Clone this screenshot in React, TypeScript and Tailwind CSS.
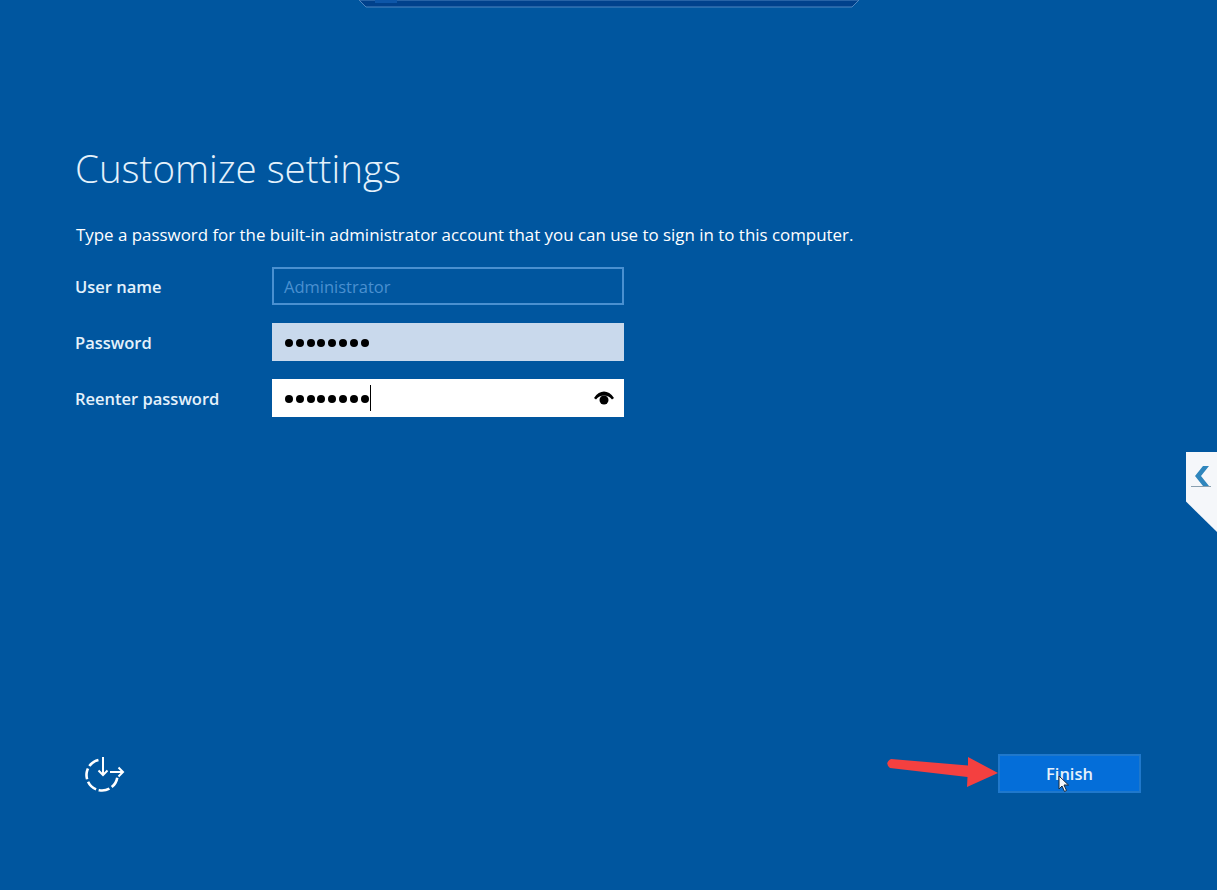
const fontStack = "font-['Open_Sans','Noto_Sans',sans-serif]";

function TopBar() {
  return (
    <div className="flex justify-center h-[8px]">
      <svg width="504" height="8" viewBox="0 0 504 8">
        <polygon points="2,0 9,7 495,7 502,0" fill="#00418c" stroke="#4f86c0" strokeWidth="1" />
        <rect x="18" y="0" width="22" height="3" fill="#0d56a8" />
      </svg>
    </div>
  );
}

function AccessIcon() {
  return (
    <svg width="42" height="38" viewBox="0 0 42 38" fill="none" stroke="#fff">
      {/* open at the top right, where the two arrows leave the ring */}
      <circle
        cx="19"
        cy="20"
        r="15.5"
        strokeWidth="2.6"
        strokeDasharray="11.1 2.7 11.1 2.7 11.1 2.7 11.1 2.7 11.1 100"
        transform="rotate(10 19 20)"
      />
      <path d="M20 2v18M15.5 15.5l4.5 4.5 4.5-4.5" strokeWidth="2" />
      <path d="M27 17h13M35.5 12.5l4.5 4.5-4.5 4.5" strokeWidth="2" />
    </svg>
  );
}

function Dots() {
  return (
    <div className="flex gap-[2.8px] pt-px">
      {[0, 1, 2, 3, 4, 5, 6, 7].map((i) => (
        <span key={i} className="w-[8px] h-[8px] rounded-full bg-black" />
      ))}
    </div>
  );
}

export default function App() {
  return (
    <div className={`relative h-[890px] overflow-hidden bg-[#00569f] flex flex-col ${fontStack}`}>
      <TopBar />

      <div className="pl-[75px] pt-[136px]">
        <h1 className="text-[38.5px] leading-[48px] font-light text-[#e4f1fb]">Customize settings</h1>
        <p className="mt-[31px] ml-px text-[16.9px] leading-[24px] text-white">
          Type a password for the built-in administrator account that you can use to sign in to this computer.
        </p>

        <div className="mt-[20px] flex flex-col gap-[18px]">
          <div className="flex items-center">
            <label className="w-[197px] pt-[2px] text-[16.5px] font-semibold text-[#e4f1fb]">User name</label>
            <div className="w-[352px] h-[38px] border-2 border-[#4a90d0] px-[10px] pt-[2px] flex items-center text-[16.5px] text-[#4a90d0]">
              Administrator
            </div>
          </div>
          <div className="flex items-center">
            <label className="w-[197px] pt-[2px] text-[16.5px] font-semibold text-[#e4f1fb]">Password</label>
            <div className="w-[352px] h-[38px] bg-[#c9d9ec] px-[13px] flex items-center">
              <Dots />
            </div>
          </div>
          <div className="flex items-center">
            <label className="w-[197px] pt-[2px] text-[16.5px] font-semibold text-[#e4f1fb]">Reenter password</label>
            <div className="w-[352px] h-[38px] bg-white pl-[13px] pr-[9px] flex items-center">
              <Dots />
              <span className="w-px h-[26px] ml-px bg-black" />
              <svg className="ml-auto" width="22" height="16" viewBox="0 0 22 16">
                <path d="M1 8C4 3.5 7.5 1.5 11 1.5S18 3.5 21 8l-2 1.6C17 6.8 14 5.5 11 5.5S5 6.8 3 9.6z" fill="#000" />
                <circle cx="11" cy="10" r="4.5" fill="#000" />
              </svg>
            </div>
          </div>
        </div>
      </div>

      <div className="mt-auto pb-[97px] pl-[83px] pr-[76px] flex items-center justify-between">
        <AccessIcon />
        <button className="w-[143px] h-[39px] pt-px bg-[#046ed9] border-2 border-[#1f78cc] text-[16.5px] font-semibold text-[#e4f1fb]">
          Finish
        </button>
      </div>

      {/* red annotation arrow */}
      <svg className="absolute left-[884px] top-[752px]" width="116" height="38" viewBox="0 0 116 38">
        <path d="M7 7L84 13.5 84 5 114 21 83 35 83.5 25 6 16Q0 11 7 7z" fill="#f44040" />
      </svg>

      {/* mouse pointer */}
      <svg className="absolute left-[1058px] top-[775px]" width="12" height="18" viewBox="0 0 12 18">
        <path d="M1 1v13l3-3 2.5 5.5 2-1L6 10h4.5z" fill="#f4f8fc" stroke="#1a2a3a" strokeWidth="1" />
      </svg>

      {/* side tab */}
      <div className="absolute right-0 top-[452px] w-[31px] h-[80px] bg-[#f5f7fa] [clip-path:polygon(0_0,100%_0,100%_100%,0_62%)]">
        <svg className="absolute left-[5px] top-[12px]" width="22" height="26" viewBox="0 0 22 26">
          <path d="M12 2L4 12l8 10h6l-8-10 8-10z" fill="#2f86bd" />
          <rect x="0" y="22" width="20" height="1" fill="#8aa0b0" />
        </svg>
      </div>
    </div>
  );
}
